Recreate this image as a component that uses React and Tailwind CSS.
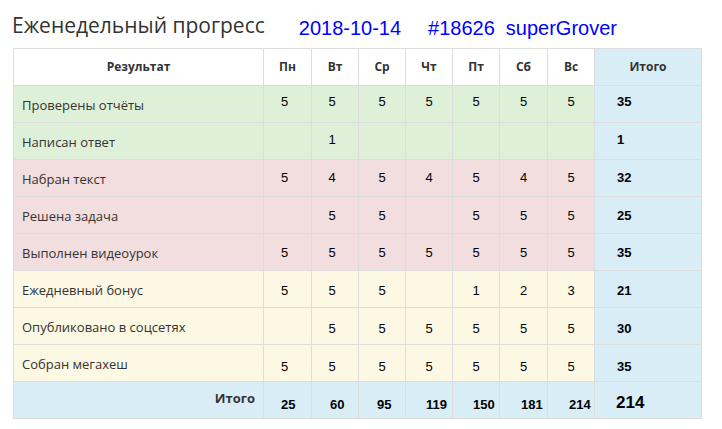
import React from "react";

const days = ["Пн", "Вт", "Ср", "Чт", "Пт", "Сб", "Вс"];

const rows = [
  { label: "Проверены отчёты", bg: "bg-[#dff0d8]", v: ["5", "5", "5", "5", "5", "5", "5"], t: "35" },
  { label: "Написан ответ", bg: "bg-[#dff0d8]", v: ["", "1", "", "", "", "", ""], t: "1" },
  { label: "Набран текст", bg: "bg-[#f2dede]", v: ["5", "4", "5", "4", "5", "4", "5"], t: "32" },
  { label: "Решена задача", bg: "bg-[#f2dede]", v: ["", "5", "5", "", "5", "5", "5"], t: "25" },
  { label: "Выполнен видеоурок", bg: "bg-[#f2dede]", v: ["5", "5", "5", "5", "5", "5", "5"], t: "35" },
  { label: "Ежедневный бонус", bg: "bg-[#fcf8e3]", v: ["5", "5", "5", "", "1", "2", "3"], t: "21" },
  { label: "Опубликовано в соцсетях", bg: "bg-[#fcf8e3]", v: ["", "5", "5", "5", "5", "5", "5"], t: "30" },
  { label: "Собран мегахеш", bg: "bg-[#fcf8e3]", v: ["5", "5", "5", "5", "5", "5", "5"], t: "35" },
];

const pts = ["pt-[7px]", "pt-[8px]", "pt-[9px]", "pt-[10px]", "pt-[10px]", "pt-[11px]", "pt-[12px]", "pt-[13px]"];
const colPr = ["pr-[6px]", "pr-[6px]", "", "", "", "", ""];
const totals = ["25", "60", "95", "119", "150", "181", "214"];
const totPl = ["pl-[17px]", "pl-[18px]", "pl-[18px]", "pl-[20px]", "pl-[20px]", "pl-[21px]", "pl-[21px]"];

const open = "font-['Open_Sans',sans-serif]";
const arial = "font-['Liberation_Sans',Arial,sans-serif]";

export default function App() {
  return (
    <div className="w-[722px] h-[429px] bg-white overflow-hidden text-[#333]">
      <div className="flex items-baseline h-[48px] pl-[12px] pt-[10px]">
        <div className={`${open} text-[21px] leading-[30px] text-[#333]`}>Еженедельный прогресс</div>
        <div className={`${arial} text-[20px] leading-[30px] text-[#0000ff] ml-[34px] relative top-[2px]`}>2018-10-14</div>
        <div className={`${arial} text-[20px] leading-[30px] text-[#0000ff] ml-[27px] relative top-[2px]`}>#18626</div>
        <div className={`${arial} text-[20px] leading-[30px] text-[#0000ff] ml-[11px] relative top-[2px]`}>superGrover</div>
      </div>
      <table className="ml-[13px] w-[688px] table-fixed border-collapse">
        <colgroup>
          <col className="w-[250px]" />
          <col className="w-[48px]" />
          <col className="w-[47px]" />
          <col className="w-[47px]" />
          <col className="w-[47px]" />
          <col className="w-[47px]" />
          <col className="w-[48px]" />
          <col className="w-[47px]" />
          <col className="w-[107px]" />
        </colgroup>
        <thead>
          <tr className="h-[37px]">
            <th className={`${open} border border-[#dddddd] bg-white text-[12px] font-bold text-center align-middle p-0`}>Результат</th>
            {days.map((d) => (
              <th key={d} className={`${open} border border-[#dddddd] bg-white text-[12px] font-bold text-center align-middle p-0`}>{d}</th>
            ))}
            <th className={`${open} border border-[#dddddd] bg-[#d9edf7] text-[12px] font-bold text-center align-middle p-0`}>Итого</th>
          </tr>
        </thead>
        <tbody>
          {rows.map((r, i) => (
            <tr key={r.label} className={`h-[37px] ${r.bg}`}>
              <td className={`${open} border border-[#dddddd] text-[13px] leading-[18px] align-middle pl-[8px] pt-[2px] text-[#333]`}>{r.label}</td>
              {r.v.map((x, j) => (
                <td key={j} className={`${arial} border border-[#dddddd] text-[13px] leading-[18px] align-top text-center ${pts[i]} ${colPr[j]} text-black`}>{x}</td>
              ))}
              <td className={`${arial} border border-[#dddddd] bg-[#d9edf7] text-[13px] leading-[18px] font-bold align-top pl-[22px] ${pts[i]} text-black`}>{r.t}</td>
            </tr>
          ))}
          <tr className="h-[37px] bg-[#d9edf7]">
            <td className={`${open} border border-[#dddddd] text-[13px] leading-[18px] font-bold text-right align-middle pr-[8px] pb-[4px] text-[#333]`}>Итого</td>
            {totals.map((x, j) => (
              <td key={j} className={`${arial} border border-[#dddddd] text-[13px] leading-[18px] font-bold align-top ${totPl[j]} pt-[14px] text-black`}>{x}</td>
            ))}
            <td className={`${arial} border border-[#dddddd] text-[17px] leading-[22px] font-bold align-top pl-[21px] pt-[10px] text-black`}>214</td>
          </tr>
        </tbody>
      </table>
    </div>
  );
}
